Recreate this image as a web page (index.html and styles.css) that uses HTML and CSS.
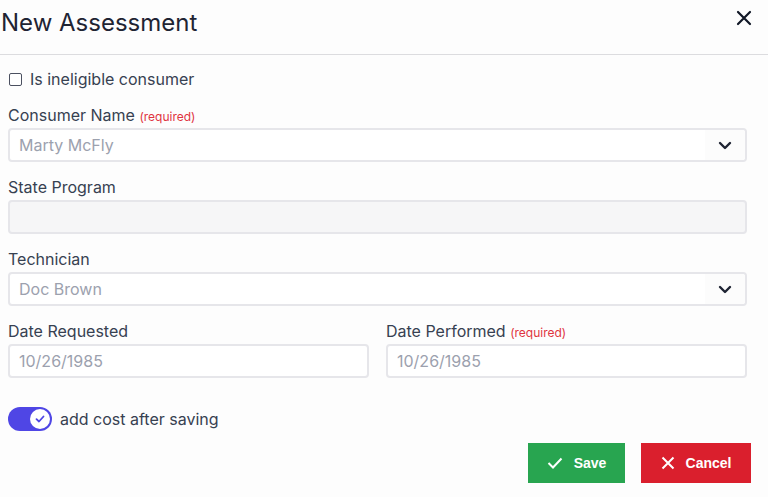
FILE: index.html
```html
<!DOCTYPE html>
<html>
<head>
<meta charset="utf-8">
<link rel="stylesheet" href="styles.css">
</head>
<body>
<div class="modal">
  <header class="modal-header">
    <h1 class="title">New Assessment</h1>
    <button class="close" aria-label="Close">
      <svg width="16" height="16" viewBox="0 0 16 16"><path d="M2 2L14 14M14 2L2 14" stroke="#111827" stroke-width="2.2" stroke-linecap="round"/></svg>
    </button>
  </header>
  <div class="modal-body">
    <label class="check-row">
      <span class="checkbox"></span>
      <span>Is ineligible consumer</span>
    </label>

    <div class="field">
      <div class="label">Consumer Name <span class="req">(required)</span></div>
      <div class="input select">
        <span class="placeholder">Marty McFly</span>
        <span class="chev"><svg width="14" height="9" viewBox="0 0 14 9"><path d="M2 2L7 7L12 2" fill="none" stroke="#1f2433" stroke-width="2.4" stroke-linecap="round" stroke-linejoin="round"/></svg></span>
      </div>
    </div>

    <div class="field">
      <div class="label">State Program</div>
      <div class="input disabled"></div>
    </div>

    <div class="field">
      <div class="label">Technician</div>
      <div class="input select">
        <span class="placeholder">Doc Brown</span>
        <span class="chev"><svg width="14" height="9" viewBox="0 0 14 9"><path d="M2 2L7 7L12 2" fill="none" stroke="#1f2433" stroke-width="2.4" stroke-linecap="round" stroke-linejoin="round"/></svg></span>
      </div>
    </div>

    <div class="field-row">
      <div class="field">
        <div class="label">Date Requested</div>
        <div class="input"><span class="placeholder">10/26/1985</span></div>
      </div>
      <div class="field">
        <div class="label">Date Performed <span class="req">(required)</span></div>
        <div class="input"><span class="placeholder">10/26/1985</span></div>
      </div>
    </div>

    <div class="toggle-row">
      <span class="toggle">
        <span class="thumb"><svg width="10" height="8" viewBox="0 0 10 8"><path d="M1.5 4.2L4 6.5L8.5 1.5" fill="none" stroke="#4f46e5" stroke-width="1.8" stroke-linecap="round" stroke-linejoin="round"/></svg></span>
      </span>
      <span>add cost after saving</span>
    </div>

    <div class="actions">
      <button class="btn save">
        <svg width="16" height="12" viewBox="0 0 16 12"><path d="M1.5 6L6 10.5L14.5 1.5" fill="none" stroke="#fff" stroke-width="2"/></svg>
        <span>Save</span>
      </button>
      <button class="btn cancel">
        <svg width="14" height="14" viewBox="0 0 14 14"><path d="M1.5 1.5L12.5 12.5M12.5 1.5L1.5 12.5" fill="none" stroke="#fff" stroke-width="2"/></svg>
        <span>Cancel</span>
      </button>
    </div>
  </div>
</div>
</body>
</html>
```
FILE: styles.css
```css
* { box-sizing: border-box; }
html, body { margin: 0; padding: 0; }
body {
  background: #fdfdfd;
  font-family: Inter, "Noto Sans", sans-serif;
  color: #374151;
  width: 768px;
  height: 497px;
  overflow: hidden;
}
.modal-header {
  height: 55px;
  border-bottom: 1px solid #dcdcdf;
  display: flex;
  align-items: flex-start;
  justify-content: space-between;
  padding: 0 16px 0 1px;
}
.title {
  margin: 7px 0 0;
  font-size: 24px;
  font-weight: 400;
  line-height: 32px;
  color: #1f2433;
}
.close {
  border: 0;
  background: none;
  padding: 0;
  margin-top: 10px;
  width: 16px;
  height: 16px;
  display: flex;
}
.modal-body {
  padding: 13px 21px 0 8px;
}
.check-row {
  display: flex;
  align-items: center;
  gap: 8px;
  height: 22px;
  font-size: 16px;
  color: #374151;
}
.checkbox {
  width: 13px;
  height: 13px;
  border: 1.5px solid #4b5060;
  border-radius: 2px;
  margin-left: 1px;
  background: #fff;
}
.field {
  margin-top: 14px;
}
.label {
  font-size: 16px;
  line-height: 22px;
  height: 22px;
  color: #374151;
  margin-bottom: 2px;
  white-space: nowrap;
}
.req {
  font-size: 12px;
  line-height: 1;
  color: #e0343f;
}
.input {
  height: 34px;
  border: 2px solid #e6e6ea;
  border-radius: 4px;
  background: #fff;
  display: flex;
  align-items: center;
  padding-left: 9px;
  font-size: 16px;
}
.input.disabled {
  background: #f6f6f7;
}
.placeholder {
  color: #9ca1ae;
  flex: 1;
}
.select { padding-right: 0; }
.chev {
  width: 40px;
  height: 100%;
  display: flex;
  align-items: center;
  justify-content: center;
  background: #fcfcfc;
  border-radius: 0 3px 3px 0;
}
.field-row {
  display: grid;
  grid-template-columns: 1fr 1fr;
  column-gap: 17px;
}
.toggle-row {
  margin-top: 29px;
  display: flex;
  align-items: center;
  gap: 8px;
  font-size: 16px;
  color: #374151;
  height: 24px;
}
.toggle {
  width: 44px;
  height: 24px;
  border-radius: 12px;
  background: #4f46e5;
  display: flex;
  align-items: center;
  justify-content: flex-end;
  padding-right: 2px;
}
.thumb {
  width: 20px;
  height: 20px;
  border-radius: 50%;
  background: #fff;
  display: flex;
  align-items: center;
  justify-content: center;
}
.actions {
  display: flex;
  justify-content: flex-end;
  gap: 16px;
  margin-top: 12px;
  margin-right: -4px;
}
.btn {
  height: 40px;
  border: 0;
  border-radius: 0;
  color: #fff;
  font-family: "Liberation Sans", Arial, sans-serif;
  font-weight: 700;
  font-size: 14px;
  display: flex;
  align-items: center;
  justify-content: center;
  gap: 11px;
  padding: 0;
}
.save { width: 97px; background: #28a550; }
.cancel { width: 110px; background: #da1f2d; }
```
